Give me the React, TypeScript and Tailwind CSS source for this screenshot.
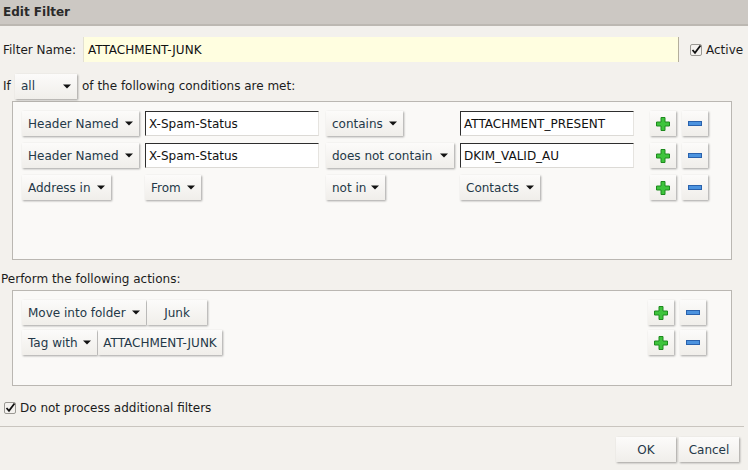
import type { ReactNode } from "react";

const btn =
  "flex items-center h-[25px] bg-gradient-to-b from-[#fcfbfa] to-[#f0eeea] shadow-[1px_1px_2px_rgba(0,0,0,0.35)] text-[#243848] whitespace-nowrap";

function Arrow() {
  return (
    <svg width="8" height="5" viewBox="0 0 8 5" className="shrink-0">
      <path d="M0 0.5 H8 L4 4.5 Z" fill="#111" />
    </svg>
  );
}

function Select({ label, w }: { label: string; w: number }) {
  return (
    <div className={`${btn} justify-between pl-[6px] pr-[6px]`} style={{ width: w }}>
      <span>{label}</span>
      <Arrow />
    </div>
  );
}

function Button({ label, w, className = "" }: { label: string; w: number; className?: string }) {
  return (
    <div className={`${btn} justify-center ${className}`} style={{ width: w }}>
      {label}
    </div>
  );
}

function TextInput({ value, w }: { value: string; w: number }) {
  return (
    <div
      className="h-[25px] bg-white border-t border-l border-t-[#2e2e2e] border-l-[#2e2e2e] border-b border-r border-b-[#dcdad6] border-r-[#e6e4e0] flex items-center pl-[3px] text-[#111]"
      style={{ width: w }}
    >
      {value}
    </div>
  );
}

function Check() {
  return (
    <svg width="12" height="12" viewBox="0 0 12 12" className="shrink-0">
      <rect x="0.5" y="0.5" width="11" height="11" rx="1.5" fill="#f4f2ef" stroke="#9a9893" />
      <path d="M2.5 6 L5 8.8 L10.5 1.5" fill="none" stroke="#111" strokeWidth="1.8" />
    </svg>
  );
}

function PlusMinus() {
  return (
    <div className="flex gap-[6px] ml-auto mr-[25px]">
      <div className={`${btn} justify-center w-[26px]`}>
        <svg width="14" height="14" viewBox="0 0 14 14">
          <path
            d="M5 0.5 H9 V5 H13.5 V9 H9 V13.5 H5 V9 H0.5 V5 H5 Z"
            fill="#3ec43c"
            stroke="#1e8a1e"
            strokeWidth="1"
          />
        </svg>
      </div>
      <div className={`${btn} justify-center w-[26px]`}>
        <svg width="14" height="5" viewBox="0 0 14 5">
          <rect x="0.5" y="0.5" width="13" height="4" fill="#4c93df" stroke="#2a62ad" />
        </svg>
      </div>
    </div>
  );
}

function Cell({ w, children }: { w: number; children: ReactNode }) {
  return (
    <div className="shrink-0" style={{ width: w }}>
      {children}
    </div>
  );
}

export default function App() {
  return (
    <div className="w-[748px] h-[470px] bg-[#f3f1ed] font-['DejaVu_Sans',sans-serif] text-[12px] text-[#1c1c1c] overflow-hidden">
      {/* Title bar */}
      <div className="h-[26px] bg-[#ccc8c3] border-b-2 border-[#bcb8b2] flex items-center pl-[3px] font-bold text-[#2a2a2a]">
        Edit Filter
      </div>

      {/* Filter name */}
      <div className="flex items-center h-[25px] mt-[11px]">
        <span className="pl-[3px] w-[83px]">Filter Name:</span>
        <div className="w-[596px] h-[25px] bg-[#fffee0] border-l border-[#e3e1d2] border-r border-r-[#b4ae9c] flex items-center pl-[4px] text-[#111]">
          ATTACHMENT-JUNK
        </div>
        <div className="flex items-center gap-[4px] ml-[11px]">
          <Check />
          <span>Active</span>
        </div>
      </div>

      {/* If row */}
      <div className="flex items-center h-[24px] mt-[12px]">
        <span className="pl-[3px] w-[15px]">If</span>
        <Select label="all" w={62} />
        <span className="ml-[5px]">of the following conditions are met:</span>
      </div>

      {/* Conditions */}
      <div className="ml-[12px] w-[720px] h-[159px] mt-[3px] border border-[#bab7b2] bg-[#faf9f7] pt-[9px] pl-[9px] flex flex-col gap-[7px]">
        <div className="flex items-center">
          <Cell w={123}><Select label="Header Named" w={117} /></Cell>
          <Cell w={181}><TextInput value="X-Spam-Status" w={174} /></Cell>
          <Cell w={134}><Select label="contains" w={77} /></Cell>
          <Cell w={190}><TextInput value="ATTACHMENT_PRESENT" w={174} /></Cell>
          <PlusMinus />
        </div>
        <div className="flex items-center">
          <Cell w={123}><Select label="Header Named" w={117} /></Cell>
          <Cell w={181}><TextInput value="X-Spam-Status" w={174} /></Cell>
          <Cell w={134}><Select label="does not contain" w={128} /></Cell>
          <Cell w={190}><TextInput value="DKIM_VALID_AU" w={174} /></Cell>
          <PlusMinus />
        </div>
        <div className="flex items-center">
          <Cell w={123}><Select label="Address in" w={89} /></Cell>
          <Cell w={181}><Select label="From" w={56} /></Cell>
          <Cell w={134}><Select label="not in" w={59} /></Cell>
          <Cell w={190}><Select label="Contacts" w={80} /></Cell>
          <PlusMinus />
        </div>
      </div>

      {/* Actions */}
      <div className="mt-[11px] h-[16px] leading-[16px] pl-[1px]">Perform the following actions:</div>
      <div className="ml-[12px] w-[720px] h-[96px] mt-[3px] border border-[#bab7b2] bg-[#faf9f7] pt-[9px] pl-[9px] flex flex-col gap-[5px]">
        <div className="flex items-center">
          <Select label="Move into folder" w={124} />
          <Button label="Junk" w={60} className="ml-[1px]" />
          <PlusMinus />
        </div>
        <div className="flex items-center">
          <Select label="Tag with" w={75} />
          <Button label="ATTACHMENT-JUNK" w={124} className="ml-[1px]" />
          <PlusMinus />
        </div>
      </div>

      {/* Stop processing */}
      <div className="flex items-center gap-[4px] mt-[14px] h-[16px] pl-[4px]">
        <Check />
        <span>Do not process additional filters</span>
      </div>

      <div className="mt-[10px] w-[744px] border-t border-[#c9c5bf]" />

      {/* Footer buttons */}
      <div className="flex justify-end gap-[3px] mt-[10px] pr-[9px]">
        <Button label="OK" w={60} />
        <Button label="Cancel" w={60} />
      </div>
    </div>
  );
}
